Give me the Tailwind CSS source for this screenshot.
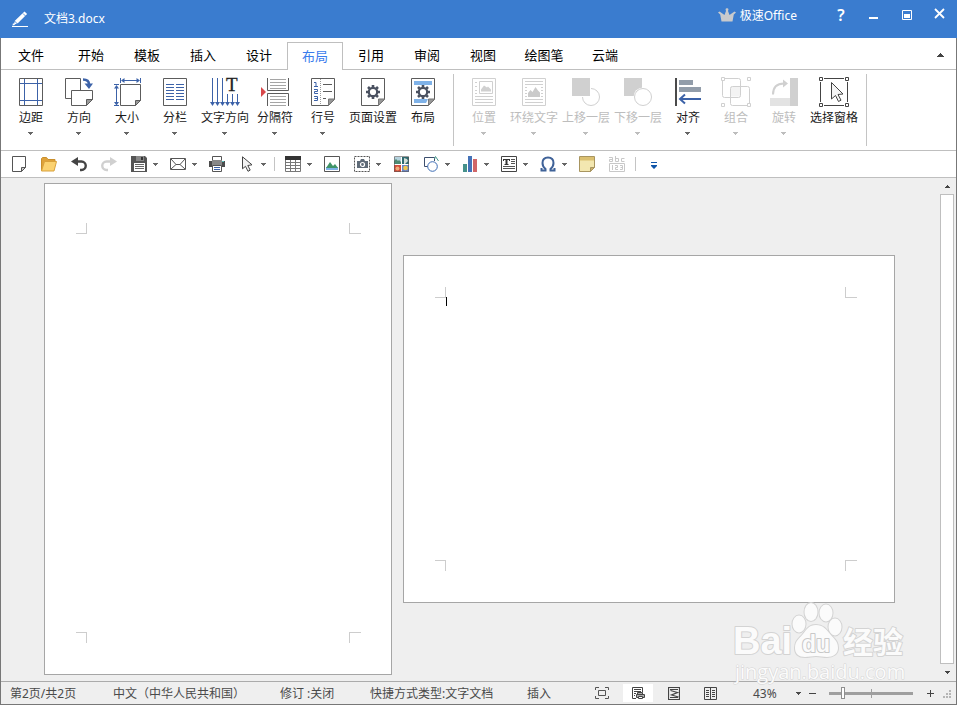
<!DOCTYPE html>
<html lang="zh-CN">

<head>
    <meta charset="UTF-8">
    <meta name="viewport" content="width=device-width, initial-scale=1.0">
    <title>文档3.docx - 极速Office</title>
    <script src="https://cdn.jsdelivr.net/npm/@tailwindcss/browser@4"></script>
</head>

<body class="h-screen flex flex-col overflow-hidden bg-white font-['Noto_Sans','Noto_Sans_CJK_SC',sans-serif] text-xs text-[#1a1a1a]">

    <!-- shared shapes -->
    <svg class="hidden">
        <symbol id="caret" viewBox="0 0 5 3"><path d="M0 0h5v1H4v1H3v1H2V2H1V1H0z" fill="currentColor" shape-rendering="crispEdges" /></symbol>
        <symbol id="gear" viewBox="-8 -8 16 16">
            <g fill="none" stroke="#4a5160">
                <circle r="4.2" stroke-width="2.2" />
                <path stroke-width="2.6" d="M0-4.500V-7M0 4.500V7M-4.500 0H-7M4.500 0H7M3.300-3.300l1.700-1.700M3.300 3.300l1.700 1.700M-3.300 3.300l-1.700 1.700M-3.300-3.300l-1.700-1.700" />
            </g>
        </symbol>
    </svg>

    <!-- title bar -->
    <header class="h-[38px] shrink-0 bg-[#3a7ccf] text-white flex items-start justify-between">
        <div class="flex h-full items-center pl-3 gap-4">
            <svg class="size-4" viewBox="0 0 16 16"><path d="M12.500 .6l2.600 2.500-9.300 9.100-4 1.600 1.100-4zM1 12l2 2-2.500.5z" fill="#fff" /><path d="M11 2.500l2.700 2.700M2.500 10l3 3" stroke="#3a7ccf" stroke-width=".8" /><path d="M0 15.500h16" stroke="#fff" /></svg>
            <h1>文档3.docx</h1>
        </div>
        <div class="flex items-center h-[30px] pr-3">
            <svg class="w-[18px] h-[14px] mr-1" viewBox="0 0 18 14"><path d="M3.500 13.500L2.200 6.500 0 4.500l1.500-1 5 3.500L8 3 7.500 1 9 0l1.500 1L10 3l1.500 4 5-3.500 1.500 1-2.200 2-1.300 7z" fill="#c8cacd" /></svg>
            <span class="mr-9 pt-[2px]">极速Office</span>
            <div class="flex items-center h-[26px]">
                <button class="w-4 h-5 mr-5 text-base leading-4 font-semibold" aria-label="帮助">?</button>
                <button aria-label="最小化" class="mr-6"><svg class="w-[9px] h-3" viewBox="0 0 9 12"><path d="M0 8h9v2H0z" fill="#fff" /></svg></button>
                <button aria-label="最大化" class="mr-[22px]"><svg class="size-[10px]" viewBox="0 0 10 10"><path d="M.5.5h9v9h-9z" fill="none" stroke="#fff" /><path d="M2 4h6v4H2z" fill="#fff" /></svg></button>
                <button aria-label="关闭" class="pb-[3px]"><svg class="size-[11px]" viewBox="0 0 11 11"><path d="M1 1l9 9M10 1l-9 9" stroke="#fff" stroke-width="1.800" /></svg></button>
            </div>
        </div>
    </header>

    <div class="flex-1 min-h-0 flex flex-col border-x border-b border-[#777]">

        <!-- tabs -->
        <nav class="h-8 shrink-0 flex items-end text-[13px] text-black border-b border-[#bfbfbf]">
            <div class="flex -mb-px">
                <button class="w-[60px] h-7 mr-[2px]">文件</button>
                <button class="w-14 h-7">开始</button>
                <button class="w-14 h-7">模板</button>
                <button class="w-14 h-7">插入</button>
                <button class="w-14 h-7">设计</button>
                <button class="w-14 h-7 bg-white border border-b-0 border-[#bfbfbf] text-[#3a7cec]">布局</button>
                <button class="w-14 h-7">引用</button>
                <button class="w-14 h-7">审阅</button>
                <button class="w-14 h-7">视图</button>
                <button class="w-[66px] h-7">绘图笔</button>
                <button class="w-14 h-7">云端</button>
            </div>
            <button class="ml-auto mr-3 h-7 text-[#444]" aria-label="折叠功能区"><svg class="w-[7px] h-1" viewBox="0 0 7 4"><path d="M3 0h1v1h1v1h1v1h1v1H0V3h1V2h1V1h1z" fill="currentColor" /></svg></button>
        </nav>

        <!-- ribbon -->
        <section class="h-[81px] shrink-0 flex items-start pl-[6px] border-b border-[#bfbfbf]">
            <button class="w-12 pt-2 flex flex-col items-center">
                <svg class="size-7" viewBox="0 0 28 28" fill="none"><path d="M2.500.5h23v27h-23z" stroke="#5c5c5c" /><path d="M7.500 1v26M20.500 1v26M3 5.500h22M3 22.500h22" stroke="#3c62a8" /></svg>
                <span class="mt-1 leading-4">边距</span>
                <svg class="w-[5px] h-[3px] mt-[6px] mr-px text-[#666]"><use href="#caret" /></svg>
            </button>
            <button class="w-12 pt-2 flex flex-col items-center">
                <svg class="size-7" viewBox="0 0 28 28" fill="#fff" stroke="#5c5c5c"><path d="M.5.500h15v20H.5z" /><path d="M6.500 12.500h21v9l-6 6h-15z" /><path d="M27.500 21.500h-6v6z" fill="#999" /><path d="M18 1.500c4 0 6 1.500 6 5" fill="none" stroke="#3c62a8" stroke-width="2.500" /><path d="M19.500 5.500h8.500L24 11z" fill="#3c62a8" stroke="none" /></svg>
                <span class="mt-1 leading-4">方向</span>
                <svg class="w-[5px] h-[3px] mt-[6px] mr-px text-[#666]"><use href="#caret" /></svg>
            </button>
            <button class="w-12 pt-2 flex flex-col items-center">
                <svg class="size-7" viewBox="0 0 28 28" fill="none" stroke="#5c5c5c"><path d="M7.500 6.500h20v16l-5 5h-15z" /><path d="M27.500 22.500h-5v5z" fill="#999" /><path d="M7.500 0v5M27.500 0v5M9 2.500h17M1 6.500h5M1 27.500h5M3.500 8v18" stroke="#3c62a8" /><path d="M8 2.500L11.500 0v5zM27 2.500L23.500 0v5zM3.500 7L6 10.500H1zM3.500 27.500L6 24H1z" fill="#3c62a8" stroke="none" /></svg>
                <span class="mt-1 leading-4">大小</span>
                <svg class="w-[5px] h-[3px] mt-[6px] mr-px text-[#666]"><use href="#caret" /></svg>
            </button>
            <button class="w-12 pt-2 flex flex-col items-center">
                <svg class="size-7" viewBox="0 0 28 28" fill="none"><path d="M2.500.5h23v27h-23z" stroke="#5c5c5c" /><path d="M5 6.500h8M5 9.500h8M5 12.500h8M5 15.500h8M5 18.500h8M5 21.500h8M15 6.500h8M15 9.500h8M15 12.500h8M15 15.500h8M15 18.500h8M15 21.500h8" stroke="#3c62a8" /></svg>
                <span class="mt-1 leading-4">分栏</span>
                <svg class="w-[5px] h-[3px] mt-[6px] mr-px text-[#666]"><use href="#caret" /></svg>
            </button>
            <button class="w-[52px] pt-2 flex flex-col items-center">
                <svg class="w-[30px] h-7 overflow-visible" viewBox="0 0 30 28"><path d="M2.500 0v26M7.500 0v26M12.500 0v26M17.500 16v10M22.500 16v10M27.500 16v10" stroke="#3c62a8" /><path d="M0 24h5l-2.500 4zM5 24h5l-2.500 4zM10 24h5l-2.500 4zM15 24h5l-2.500 4zM20 24h5l-2.500 4zM25 24h5l-2.500 4z" fill="#3c62a8" /><text x="16" y="13" font-family="Liberation Serif" font-size="19" fill="#222" stroke="#222" stroke-width=".3">T</text></svg>
                <span class="mt-1 leading-4 whitespace-nowrap">文字方向</span>
                <svg class="w-[5px] h-[3px] mt-[6px] mr-px text-[#666]"><use href="#caret" /></svg>
            </button>
            <button class="w-12 pt-2 flex flex-col items-center">
                <svg class="size-7" viewBox="0 0 28 28" fill="none"><path d="M6.500 0v12.500h21V0M6.500 28V15.500h21V28" stroke="#5c5c5c" /><path d="M9 1.500h16M9 4.500h16M9 7.500h16M9 10.500h16M9 18.500h16M9 21.500h16M9 24.500h16M9 27.500h16" stroke="#a5a5a5" /><path d="M0 9l5 5-5 5z" fill="#d9484b" /></svg>
                <span class="mt-1 leading-4">分隔符</span>
                <svg class="w-[5px] h-[3px] mt-[6px] mr-px text-[#666]"><use href="#caret" /></svg>
            </button>
            <button class="w-12 pt-2 flex flex-col items-center">
                <svg class="size-7" viewBox="0 0 28 28" fill="none"><path d="M2.500.500h23v21l-6 6h-17z" stroke="#5c5c5c" /><path d="M25.500 21h-6v6.500z" fill="#999" stroke="#777" /><path d="M11.500 1v26" stroke="#999" stroke-dasharray="1 1" /><path d="M14 6.500h9M14 13.500h9M14 20.500h3" stroke="#5c5c5c" /><path d="M5 4.500h2v4M5 8.500h4M5 11.500h3.500v2H5.500v2H9M5 18.500h3.500v4H5M5.500 20.500h3" stroke="#3c62a8" /></svg>
                <span class="mt-1 leading-4">行号</span>
                <svg class="w-[5px] h-[3px] mt-[6px] mr-px text-[#666]"><use href="#caret" /></svg>
            </button>
            <button class="w-[52px] pt-2 flex flex-col items-center">
                <svg class="size-7" viewBox="0 0 28 28" fill="none"><path d="M2.500.500h23v21l-6 6h-17z" stroke="#5c5c5c" /><path d="M25.500 21h-6v6.500z" fill="#999" stroke="#777" /><use href="#gear" x="6" y="6" width="16" height="16" /></svg>
                <span class="mt-1 leading-4 whitespace-nowrap">页面设置</span>
            </button>
            <button class="w-12 pt-2 flex flex-col items-center">
                <svg class="size-7" viewBox="0 0 28 28" fill="none"><path d="M2.500.500h23v21l-6 6h-17z" stroke="#5c5c5c" /><path d="M5 3h18v4H5zM5 21h14l-2 4H5z" fill="#7fb2e8" /><path d="M25.500 21h-6v6.500z" fill="#999" stroke="#777" /><circle cx="14" cy="14" r="7" fill="#fff" /><use href="#gear" x="6" y="6" width="16" height="16" /></svg>
                <span class="mt-1 leading-4">布局</span>
            </button>

            <div class="w-px h-[72px] mt-1 mx-[6px] bg-[#c4c4c4]"></div>

            <button class="w-12 pt-2 flex flex-col items-center text-[#bdbdbd]" disabled>
                <svg class="size-7" viewBox="0 0 28 28" fill="none" stroke="#d0d0d0"><path d="M2.500.5h23v27h-23zM9.500 3.500h13v12h-13zM5 4.500h2M5 8.500h2M5 12.500h2M5 15.500h2M5 18.500h18M5 21.500h18M5 24.500h18" /><path d="M11 13.500v-2l3-4 3 2 1-1 3 3v2z" fill="#d0d0d0" stroke="none" /></svg>
                <span class="mt-1 leading-4">位置</span>
                <svg class="w-[5px] h-[3px] mt-[6px] mr-px"><use href="#caret" /></svg>
            </button>
            <button class="w-[52px] pt-2 flex flex-col items-center text-[#bdbdbd]" disabled>
                <svg class="size-7" viewBox="0 0 28 28" fill="none" stroke="#d0d0d0"><path d="M2.500.5h23v27h-23zM5 3.500h18M5 6.500h18M5 9.500h2M21 9.500h2M5 12.500h2M21 12.500h2M5 15.500h2M21 15.500h2M5 18.500h2M21 18.500h2M5 21.500h18M5 24.500h18" /><path d="M8 19v-4l2.500-3 2 2 3-5 2.500 3.500 2 2V19z" fill="#cacaca" stroke="none" /></svg>
                <span class="mt-1 leading-4 whitespace-nowrap">环绕文字</span>
                <svg class="w-[5px] h-[3px] mt-[6px] mr-px"><use href="#caret" /></svg>
            </button>
            <button class="w-[52px] pt-2 flex flex-col items-center text-[#bdbdbd]" disabled>
                <svg class="size-7" viewBox="0 0 28 28"><circle cx="19" cy="19" r="8.500" fill="none" stroke="#d0d0d0" /><path d="M0 0h19v19H0z" fill="#fff" /><path d="M0 0h18v18H0z" fill="#d0d0d0" /></svg>
                <span class="mt-1 leading-4 whitespace-nowrap">上移一层</span>
                <svg class="w-[5px] h-[3px] mt-[6px] mr-px"><use href="#caret" /></svg>
            </button>
            <button class="w-[52px] pt-2 flex flex-col items-center text-[#bdbdbd]" disabled>
                <svg class="size-7" viewBox="0 0 28 28"><path d="M0 0h18v18H0z" fill="#d0d0d0" /><circle cx="19" cy="19" r="9.500" fill="#fff" /><circle cx="19" cy="19" r="8.500" fill="#fff" stroke="#d0d0d0" /></svg>
                <span class="mt-1 leading-4 whitespace-nowrap">下移一层</span>
                <svg class="w-[5px] h-[3px] mt-[6px] mr-px"><use href="#caret" /></svg>
            </button>
            <button class="w-12 pt-2 flex flex-col items-center">
                <svg class="size-7" viewBox="0 0 28 28"><path d="M1 0h2v28H1z" fill="#4a4a4a" /><path d="M5 2h14v5H5zM5 9h22v5H5z" fill="#929daa" /><path d="M27 21H6M11 16.500L6 21l5 4.500" stroke="#3c62a8" stroke-width="2" fill="none" /></svg>
                <span class="mt-1 leading-4">对齐</span>
                <svg class="w-[5px] h-[3px] mt-[6px] mr-px text-[#666]"><use href="#caret" /></svg>
            </button>
            <button class="w-12 pt-2 flex flex-col items-center text-[#bdbdbd]" disabled>
                <svg class="w-[30px] h-7 overflow-visible" viewBox="0 0 30 28" fill="none" stroke="#d0d0d0"><path d="M9.500 8.500h10v10h-10z" fill="#f3f3f3" stroke="none" /><rect x="1.500" y=".5" width="18" height="19" rx="2" /><rect x="9.500" y="8.500" width="19" height="19" rx="2" /><path d="M.5-.5h3v3h-3zM26.500-.5h3v3h-3zM.5 25.500h3v3h-3zM26.500 25.500h3v3h-3z" fill="#fff" /></svg>
                <span class="mt-1 leading-4">组合</span>
                <svg class="w-[5px] h-[3px] mt-[6px] mr-px"><use href="#caret" /></svg>
            </button>
            <button class="w-12 pt-2 flex flex-col items-center text-[#bdbdbd]" disabled>
                <svg class="size-7" viewBox="0 0 28 28"><path d="M20 0h8v28h-8z" fill="#d0d0d0" /><path d="M0 20h20v8H0z" fill="#e3e3e3" /><path d="M3 16.500C3 9 7 5.500 14 5.500" stroke="#d0d0d0" stroke-width="2" fill="none" /><path d="M13 1.500L18 5.500l-5 4z" fill="#d0d0d0" /></svg>
                <span class="mt-1 leading-4">旋转</span>
                <svg class="w-[5px] h-[3px] mt-[6px] mr-px"><use href="#caret" /></svg>
            </button>
            <button class="w-[52px] pt-2 flex flex-col items-center">
                <svg class="w-[30px] h-7 overflow-visible" viewBox="0 0 30 28" fill="none" stroke="#444"><path d="M5 .5h20M5 27.500h20M1.500 4v20M28.500 4v20" /><path d="M.5-.5h3v3h-3zM26.500-.5h3v3h-3zM.5 25.500h3v3h-3zM26.500 25.500h3v3h-3z" fill="#fff" /><path d="M12.500 4.500v16.500l4-3.500 3 6 2.500-1.300-3-5.700 5-.5z" fill="#f4f4f4" /></svg>
                <span class="mt-1 leading-4 whitespace-nowrap">选择窗格</span>
            </button>

            <div class="w-px h-[72px] mt-1 ml-[6px] bg-[#c4c4c4]"></div>
        </section>

        <!-- quick access bar -->
        <section class="h-[27px] shrink-0 flex items-center pl-[3px] border-b border-[#bfbfbf] text-[#666]">
            <button class="px-[7px]" aria-label="新建"><svg class="size-4" viewBox="0 0 16 16" fill="#fff" stroke="#555"><path d="M1.500.500h13v11l-4 4h-9z" /><path d="M14.500 11.500h-4v4z" fill="#ccc" /></svg></button>
            <button class="px-[7px]" aria-label="打开"><svg class="size-4" viewBox="0 0 16 16"><path d="M.5 15V2.500l1-1h4l1.500 2h7V6" fill="#dfa23a" stroke="#c98f2c" /><path d="M3.500 5.500h12L13 15H.5z" fill="#fbd271" stroke="#d9a23c" /></svg></button>
            <button class="px-[7px]" aria-label="撤销"><svg class="size-4" viewBox="0 0 16 16"><path d="M4 5.500h6.500a4 4 0 0 1 0 8.500H9" stroke="#444" stroke-width="2.400" fill="none" /><path d="M0 5.500L7 1v9z" fill="#444" /></svg></button>
            <button class="px-[7px]" aria-label="重做" disabled><svg class="size-4" viewBox="0 0 16 16"><path d="M12 5.500H5.500a4 4 0 0 0 0 8.500H7" stroke="#d0d0d0" stroke-width="2.400" fill="none" /><path d="M16 5.500L9 1v9z" fill="#d0d0d0" /></svg></button>
            <button class="pl-[7px] pr-[5px] flex items-center gap-[6px]" aria-label="保存"><svg class="size-4" viewBox="0 0 16 16"><path d="M0 0h14l2 2v14H0z" fill="#555" /><path d="M5 0h8v5H5z" fill="#888" /><path d="M10 1h2v3h-2z" fill="#333" /><path d="M3 7h11v8H3z" fill="#fff" /><path d="M4 8.500h9M4 10.500h9M4 12.500h9" stroke="#666" /></svg><svg class="w-[5px] h-[3px]"><use href="#caret" /></svg></button>
            <button class="pl-[7px] pr-[5px] flex items-center gap-[6px]" aria-label="邮件"><svg class="size-4" viewBox="0 0 16 16" fill="none" stroke="#555"><path d="M.5 2.500h15v11H.5zM1 3l5 5.500h4L15 3M1 13l5-4.500M15 13l-5-4.500" /></svg><svg class="w-[5px] h-[3px]"><use href="#caret" /></svg></button>
            <button class="px-[7px]" aria-label="打印"><svg class="size-4" viewBox="0 0 16 16"><path d="M3.500.5h9V6h-9z" fill="#fff" stroke="#555" /><path d="M3 4h10v1h3v6H0V5h3z" fill="#888" /><path d="M0 5h3v6H0zM13 5h3v6h-3z" fill="#4c4c4c" /><path d="M3.500 9.500h9v6h-9z" fill="#fff" stroke="#555" /><path d="M5 11.500h6M5 13.500h6" stroke="#3c62a8" /><path d="M13 5.500h2" stroke="#55c2bd" /></svg></button>
            <button class="pl-[7px] pr-[5px] flex items-center gap-[6px]" aria-label="选择"><svg class="size-4" viewBox="0 0 16 16"><path d="M3.500.8v12l3-2.500 2.500 5 2.200-1.200-2.400-4.600 4.200-.7z" fill="#f2f2f2" stroke="#444" /></svg><svg class="w-[5px] h-[3px]"><use href="#caret" /></svg></button>
            <div class="w-px h-[14px] mx-[3px] bg-[#c4c4c4]"></div>
            <button class="pl-[7px] pr-[5px] flex items-center gap-[6px]" aria-label="表格"><svg class="size-4" viewBox="0 0 16 16" fill="none" stroke="#777"><path d="M.5.500h15v15H.5zM.5 6.500h15M.5 9.500h15M.5 12.500h15M5.500 4v11M10.500 4v11" /><path d="M0 0h16v4H0z" fill="#333" stroke="none" /></svg><svg class="w-[5px] h-[3px]"><use href="#caret" /></svg></button>
            <button class="px-[7px]" aria-label="图片"><svg class="size-4" viewBox="0 0 16 16"><path d="M.5.500h15v15H.5z" fill="#fff" stroke="#555" /><path d="M2 11h12v3H2z" fill="#7fb2e8" /><path d="M2 12l4-6 3 4 2-2 3 4z" fill="#3f9468" /></svg></button>
            <button class="pl-[7px] pr-[5px] flex items-center gap-[6px]" aria-label="截图"><svg class="size-4" viewBox="0 0 16 16"><path d="M.5.500h15v15H.5z" fill="none" stroke="#555" stroke-dasharray="2 1" /><path d="M3 5h3l1-2h3l1 2h3v7H3z" fill="#5f6b78" /><circle cx="8.500" cy="8.500" r="2" fill="#5f6b78" stroke="#fff" stroke-width="1.200" /></svg><svg class="w-[5px] h-[3px]"><use href="#caret" /></svg></button>
            <button class="px-[7px]" aria-label="剪贴画"><svg class="size-4" viewBox="0 0 16 16"><path d="M1 1h7v7H1z" fill="#b5d2de" /><path d="M1 8V5l2-2 2 2 1-1 2 2v2z" fill="#4c8a72" /><path d="M9 1h7v7H9z" fill="#2f6a70" /><path d="M11 2l3 1 1 2-3 3h-1z" fill="#d5dfd8" /><path d="M1 9h7v7H1z" fill="#d44c38" /><circle cx="4.500" cy="12.500" r="2" fill="#efac7a" /><path d="M9 9h7v7H9z" fill="#6b86c5" /><circle cx="12.500" cy="12" r="2.300" fill="#f0c64c" /><path d="M1.500.5h14v15h-14z" fill="none" stroke="#555" stroke-opacity=".6" /></svg></button>
            <button class="pl-[7px] pr-[5px] flex items-center gap-[6px]" aria-label="形状"><svg class="size-4" viewBox="0 0 16 16" fill="none" stroke="#3d4f6e"><path d="M5 10.500H1.500v-9h10V5" /><circle cx="9.500" cy="10.500" r="4.800" fill="#fff" stroke="#3c6cb4" /><path d="M11.500 3L12.500.5 15.500 5" stroke="#4a9a8e" /></svg><svg class="w-[5px] h-[3px]"><use href="#caret" /></svg></button>
            <button class="pl-[7px] pr-[5px] flex items-center gap-[6px]" aria-label="图表"><svg class="size-4" viewBox="0 0 16 16"><path d="M1 8h4v8H1z" fill="#45918a" /><path d="M6 0h4v16H6z" fill="#4472b8" /><path d="M11 3h4v13h-4z" fill="#d06668" /></svg><svg class="w-[5px] h-[3px]"><use href="#caret" /></svg></button>
            <button class="pl-[7px] pr-[5px] flex items-center gap-[6px]" aria-label="文本框"><svg class="size-4" viewBox="0 0 16 16"><path d="M.5.500h15v15H.5z" fill="#fff" stroke="#444" /><path d="M10 3.500h4M10 5.500h4M10 7.500h4M2 10.500h12M2 12.500h12" stroke="#555" /><path d="M2 3h7v2H8V4H6.500v4h1v1h-4V8h1V4H3v1H2z" fill="#333" /></svg><svg class="w-[5px] h-[3px]"><use href="#caret" /></svg></button>
            <button class="pl-[7px] pr-[5px] flex items-center gap-[6px]" aria-label="符号"><svg class="size-4" viewBox="0 0 16 16"><path d="M1.500 12v2.500h4V13C3 11 2.500 9 2.500 7c0-3.500 2-5.500 5.500-5.500s5.500 2 5.500 5.500c0 2-.5 4-3 6v1.500h4V12" fill="none" stroke="#3f6298" stroke-width="2" /></svg><svg class="w-[5px] h-[3px]"><use href="#caret" /></svg></button>
            <button class="px-[7px]" aria-label="批注"><svg class="size-4" viewBox="0 0 16 16"><path d="M.5.500h15v11l-4 4H.5z" fill="#f3e7b0" stroke="#a89560" /><path d="M1 1h14v3.500H1z" fill="#dbc071" /><path d="M15.500 11.500h-4v4z" fill="#c9b06b" stroke="#a89560" /></svg></button>
            <button class="px-[7px]" aria-label="字数统计" disabled><svg class="size-4" viewBox="0 0 16 16" fill="none" stroke="#c8c8c8"><path d="M0 1.500h3.500v4H.5v-2h3M6.500 0v5.500h3v-3h-3M15.500 2.500h-3v3h3M.5 7.500h15v8H.5zM3.500 9v5M6 9.500h2.500v2h-2v2H9M11 9.500h2.500v4H11M11.500 11.500h2" /></svg></button>
            <div class="w-px h-[14px] mx-[3px] bg-[#c4c4c4]"></div>
            <button class="px-3" aria-label="自定义工具栏"><svg class="w-[6px] h-[7px] mt-[3px]" viewBox="0 0 6 7"><path d="M0 0h6v1H0zM0 3h6v1L3 7 0 4z" fill="#0f55a8" /></svg></button>
        </section>

        <!-- document canvas -->
        <main class="flex-1 min-h-0 bg-[#efefef] flex justify-between">
            <div class="flex-1 min-w-0 flex items-start pt-[5px] pl-[43px] overflow-hidden">
                <div class="flex items-center gap-[11px]">
                    <article class="w-[348px] h-[492px] shrink-0 bg-white border border-[#a6a6a6] pl-[31px] pr-[30px] pt-[39px] pb-[31px] grid grid-cols-2 content-between">
                        <i class="size-[11px] border-r border-b border-[#cdcdcd]"></i>
                        <i class="w-3 h-[11px] border-l border-b border-[#cdcdcd] justify-self-end"></i>
                        <i class="size-[11px] border-r border-t border-[#cdcdcd]"></i>
                        <i class="w-3 h-[11px] border-l border-t border-[#cdcdcd] justify-self-end"></i>
                    </article>
                    <article class="w-[492px] h-[348px] shrink-0 bg-white border border-[#a6a6a6] pl-[31px] pr-[37px] pt-[31px] pb-[31px] grid grid-cols-2 content-between">
                        <i class="relative size-[11px] border-r border-b border-[#cdcdcd]">
                            <b class="absolute left-[11px] top-[10px] w-px h-[9px] bg-black"></b>
                        </i>
                        <i class="w-3 h-[11px] border-l border-b border-[#cdcdcd] justify-self-end"></i>
                        <i class="size-[11px] border-r border-t border-[#cdcdcd]"></i>
                        <i class="w-3 h-[11px] border-l border-t border-[#cdcdcd] justify-self-end"></i>
                    </article>
                </div>
            </div>
            <div class="w-[14px] mr-[2px] flex flex-col items-center text-[#444]">
                <button class="h-4 flex items-center" aria-label="向上滚动"><svg class="w-[5px] h-[3px] rotate-180"><use href="#caret" /></svg></button>
                <div class="flex-1 w-full bg-white border border-[#bfbfbf]"></div>
                <button class="h-[17px] flex items-center" aria-label="向下滚动"><svg class="w-[5px] h-[3px]"><use href="#caret" /></svg></button>
            </div>
        </main>

        <!-- status bar -->
        <footer class="h-[23px] shrink-0 bg-[#efefef] border-t border-[#ababab] flex items-center justify-between text-[#4a4a4a] whitespace-nowrap">
            <div class="flex items-center pl-[9px] pt-px">
                <span class="w-[103px]">第2页/共2页</span>
                <span class="w-[167px]">中文（中华人民共和国）</span>
                <span class="w-[90px]">修订 :关闭</span>
                <span class="w-[157px]">快捷方式类型:文字文档</span>
                <span>插入</span>
            </div>
            <div class="flex items-center pr-1">
                <button class="px-2" aria-label="适合窗口"><svg class="w-[14px] h-3" viewBox="0 0 14 12" fill="none" stroke="#555"><path d="M.5 3V.5H4M10 .5h3.500V3M13.500 9v2.500H10M4 11.500H.5V9M3.500 3.500h7v5h-7z" /></svg></button>
                <button class="w-[30px] h-[18px] ml-[6px] flex items-center justify-center bg-white" aria-label="页面视图"><svg class="w-[14px] h-[14px]" viewBox="0 0 14 14" fill="none" stroke="#444"><path d="M5 12.500H1.500V1.500h10V6M3 3.500h7M3 5.500h7M3 7.500h2M3 9.500h1" /><path d="M6.500 6.500h5v2h-5zM5.500 8.500h8v3h-8z" fill="#aaa" /><path d="M7.500 10.500h4v2h-4z" fill="#fff" /></svg></button>
                <button class="ml-[15px]" aria-label="网页视图"><svg class="w-3 h-[13px]" viewBox="0 0 12 13" fill="none" stroke="#444"><path d="M.5.500h11v12H.5zM2 2.500h8M2 10.500h8M2.500 3.500l7 2-6 2.500 7 2" stroke-width="1.200" /></svg></button>
                <button class="ml-6" aria-label="阅读视图"><svg class="w-[13px] h-[13px]" viewBox="0 0 13 13" fill="none" stroke="#444"><path d="M.5.500h12v12H.5zM6.500 0v13M2 3.500h3M2 5.500h3M2 7.500h3M2 9.500h3M8 3.500h3M8 5.500h3M8 7.500h3M8 9.500h3" /></svg></button>
                <span class="w-[43px] ml-9 pt-px">43%</span>
                <button aria-label="缩放比例"><svg class="w-[5px] h-[3px]"><use href="#caret" /></svg></button>
                <button class="ml-2 w-2" aria-label="缩小"><svg class="w-[7px] h-[7px]" viewBox="0 0 7 7"><path d="M0 3.500h7" stroke="#444" /></svg></button>
                <div class="relative w-[84px] ml-3 flex items-center">
                    <input type="range" min="15" max="200" value="43" aria-label="缩放" class="appearance-none w-full h-[3px] bg-[#9f9f9f] [&::-webkit-slider-thumb]:appearance-none [&::-webkit-slider-thumb]:w-1 [&::-webkit-slider-thumb]:h-3 [&::-webkit-slider-thumb]:bg-white [&::-webkit-slider-thumb]:border [&::-webkit-slider-thumb]:border-[#8f8f8f]">
                    <i class="absolute left-1/2 -top-[3px] w-px h-[9px] bg-[#9f9f9f]"></i>
                </div>
                <button class="ml-[14px]" aria-label="放大"><svg class="w-[7px] h-[7px]" viewBox="0 0 7 7"><path d="M0 3.500h7M3.500 0v7" stroke="#444" /></svg></button>
                <svg class="w-[9px] h-[9px] ml-[9px] self-end mb-[3px]" viewBox="0 0 9 9"><path d="M6 0h2v2H6zM3 3h2v2H3zM6 3h2v2H6zM0 6h2v2H0zM3 6h2v2H3zM6 6h2v2H6z" fill="#b5b5b5" /></svg>
            </div>
        </footer>
    </div>

    <!-- watermark -->
    <svg class="absolute right-[47px] bottom-[19px] w-[180px] h-[88px] pointer-events-none" viewBox="0 0 180 88" fill="#fbfbfb" stroke="#d3d3d3" stroke-width="2" paint-order="stroke" stroke-linejoin="round">
        <text x="3" y="56" font-family="Liberation Sans" font-weight="700" font-size="38">Bai</text>
        <ellipse cx="69" cy="26" rx="6.500" ry="8.500" />
        <ellipse cx="81" cy="14" rx="6.500" ry="9" />
        <ellipse cx="96" cy="15" rx="6.500" ry="8.500" />
        <ellipse cx="105" cy="29" rx="6.500" ry="8.500" />
        <path d="M86 27c-7 0-9 4-13 9s-8 7-8 14c0 6 4 9 10 9 4 0 7-1 11-1s7 1 11 1c6 0 11-3 11-9 0-7-4-9-8-14s-7-9-14-9z" />
        <text x="72" y="54" font-family="Liberation Sans" font-weight="700" font-size="23" stroke="#c8c8c8">du</text>
        <text x="113" y="55" font-family="Noto Sans CJK SC" font-weight="700" font-size="30">经验</text>
        <text x="5" y="81" font-family="Open Sans" font-size="20" stroke-width="1">jingyan.baidu.com</text>
    </svg>

</body>

</html>
